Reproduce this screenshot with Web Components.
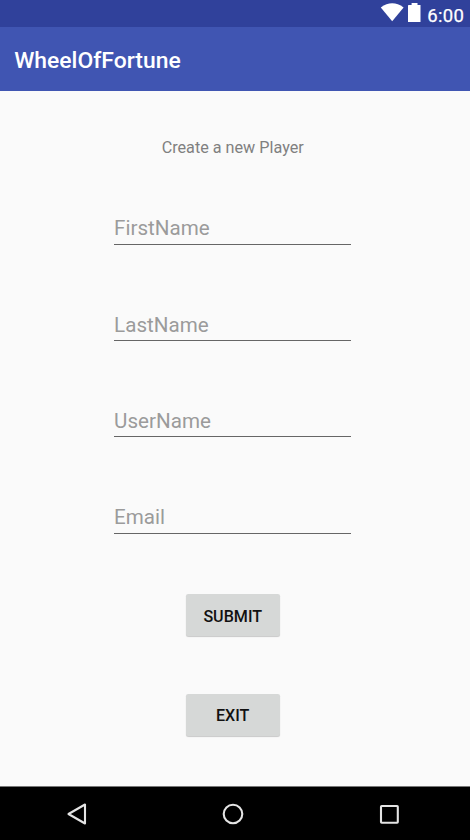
<!DOCTYPE html>
<html lang="en"><head><meta charset="utf-8"><title>WheelOfFortune</title>
<style>html,body{margin:0;height:100%;overflow:hidden}body{font-family:Roboto,sans-serif}</style></head>
<body><player-screen></player-screen>
<script>
const define = (name, html) => customElements.define(name, class extends HTMLElement {
  constructor() {
    super();
    this.attachShadow({mode: 'open'}).innerHTML = html;
  }
});

define('status-bar', `<style>
:host{display:flex;height:27px;box-sizing:border-box;background:#30419b;color:#fff;justify-content:flex-end;padding-right:5.7px;align-items:flex-start}
svg{display:block;flex:none}
span{font-size:18.5px;line-height:22px;letter-spacing:.35px;-webkit-text-stroke:.25px;padding:5px 0 0 5.7px}
</style><svg width="42" height="27" viewBox="0 0 42 27" fill="#fff"><path d="M.8 7.4Q12.2-1 23.6 7.4L12.2 21.3Z"/><path d="M28.7 5H31.6V3H37.5V5H40.5V22H28Q28 22 28 21.2V5.7Q28 5 28.7 5Z"/></svg><span><slot></slot></span>`);

define('app-bar', `<style>
:host{display:flex;height:64.3px;box-sizing:border-box;background:#4055b2;color:#fff;align-items:center;padding:2px 14.2px 0;font-size:22.9px;font-weight:500}
</style><slot></slot>`);

define('text-field', `<style>
:host{display:block;box-sizing:border-box;width:237.2px;height:28.3px;border-bottom:1.3px solid #666;color:#9b9b9b;font-size:20.6px;line-height:24px}
</style><slot></slot>`);

define('raised-button', `<style>
:host{display:flex}
button{width:94px;height:42px;margin:0;padding:2px 0 0;border:0;border-radius:2.3px;background:#d6d8d7;box-shadow:0 1px 1px #0003;color:#111;font:500 16.1px Roboto,sans-serif}
</style><button type="button"><slot></slot></button>`);

define('nav-bar', `<style>
:host{display:grid;grid-template-columns:repeat(3,156.4px);justify-content:center;box-sizing:border-box;height:54px;background:#000;border-top:1px solid #777;padding-right:4px;place-items:center}
svg{display:block;fill:none;stroke:#e4e4e4;stroke-width:2.1}
</style>
<svg width="24" height="24" viewBox="0 0 24 24"><path d="M20 2.5V21.5L3.5 12Z" stroke-linejoin="round"/></svg>
<svg width="24" height="24" viewBox="0 0 24 24"><circle cx="12" cy="12" r="9.3"/></svg>
<svg width="24" height="24" viewBox="0 0 24 24"><rect x="4" y="4" width="16.8" height="16.8" rx=".7"/></svg>`);

define('player-screen', `<style>
:host{display:flex;flex-direction:column;height:840px;width:470px;background:#fafafa}
main{flex:1;display:flex;flex-direction:column;align-items:center;padding-right:4.6px}
p{margin:47px 0 0;font-size:16.2px;line-height:20px;color:#808080}
.fields{display:grid;gap:68px;margin-top:58.2px}
.actions{display:grid;gap:57.5px;margin-top:60.5px}
</style>
<status-bar>6:00</status-bar><app-bar>WheelOfFortune</app-bar>
<main><p>Create a new Player</p>
<div class="fields"><text-field>FirstName</text-field><text-field>LastName</text-field><text-field>UserName</text-field><text-field>Email</text-field></div>
<div class="actions"><raised-button>SUBMIT</raised-button><raised-button>EXIT</raised-button></div></main>
<nav-bar></nav-bar>`);
</script></body></html>
